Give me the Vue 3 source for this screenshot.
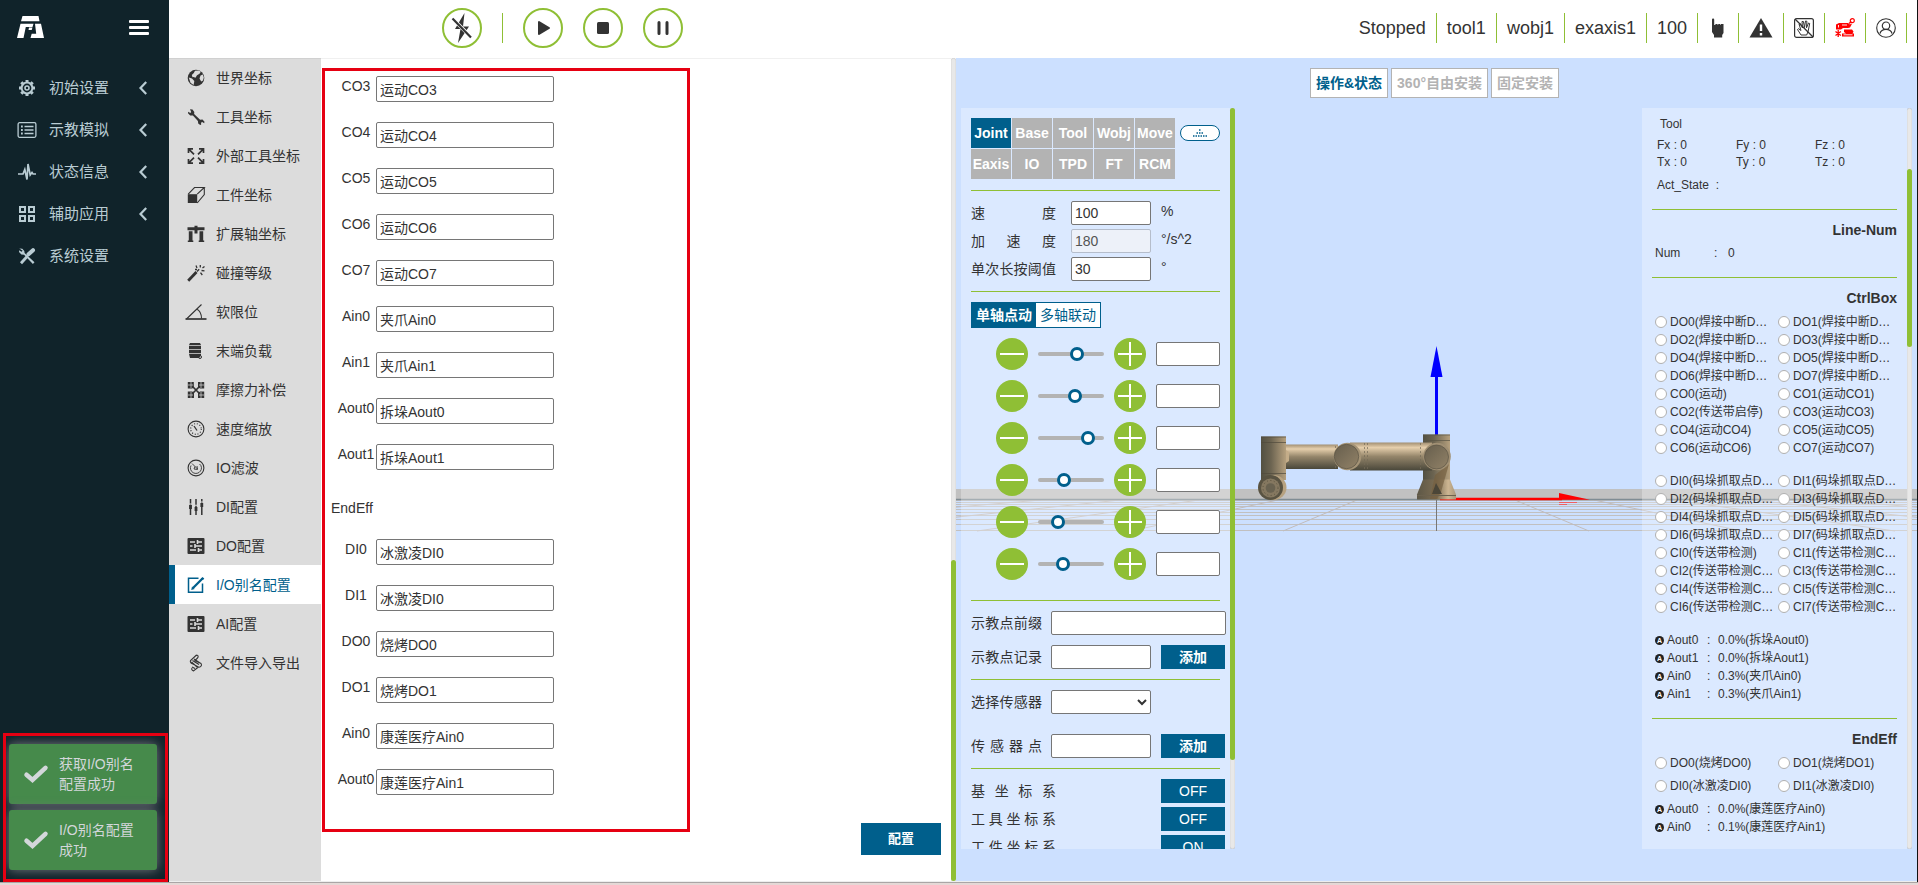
<script setup>
import { ref } from 'vue'

const mainMenu = [
  { label: '初始设置', more: true, icon: '<path fill="none" stroke="currentColor" stroke-width="2" d="M9 3.6a5.4 5.4 0 1 1 0 10.8a5.4 5.4 0 1 1 0-10.8"/><circle cx="9" cy="9" r="2" fill="none" stroke="currentColor" stroke-width="1.6"/><path stroke="currentColor" stroke-width="3" d="M9 1v2.4M9 14.6V17M1 9h2.4M14.600 9H17M3.300 3.300l1.600 1.600M13.100 13.100l1.600 1.600M3.300 14.700l1.600-1.600M13.100 4.900l1.600-1.600"/>' },
  { label: '示教模拟', more: true, icon: '<rect x=".1" y="1.700" width="17.800" height="14.600" rx="1.500" fill="none" stroke="currentColor" stroke-width="1.300"/><path stroke="currentColor" stroke-width="1.300" d="M6.500 5.500h9M6.500 9h9M6.500 12.500h9"/><path stroke="currentColor" stroke-width="1.800" d="M3 5.500h1.800M3 9h1.800M3 12.500h1.800"/>' },
  { label: '状态信息', more: true, icon: '<path fill="none" stroke="currentColor" stroke-width="1.700" d="M0 11h5l1.800-4.500L9 16.500L10 1l2.200 11L14 9.500l1 1.500h3"/>' },
  { label: '辅助应用', more: true, icon: '<g fill="none" stroke="currentColor" stroke-width="2"><rect x="2" y="2" width="5" height="5"/><rect x="11" y="2" width="5" height="5"/><rect x="2" y="11" width="5" height="5"/><rect x="11" y="11" width="5" height="5"/></g>' },
  { label: '系统设置', more: false, icon: '<path fill="currentColor" d="M1.300 1.500l3 .3 2 2.200.3 2 9.900 9.200-1.600 1.900L6 7.700l-2.600-.2L1 5l.2-1.700 2.300 1.500 1.200-1z"/><path stroke="currentColor" stroke-width="4" stroke-linecap="round" d="M15 3.200L10.500 7.300"/><path stroke="currentColor" stroke-width="2.800" d="M9.500 9L3 16.300"/>' }
]

const tune = '<rect x=".5" y="1" width="17" height="16" rx="1" fill="currentColor"/><path stroke="#dcdcdc" stroke-width="1.600" d="M3 5h5M10.500 5h4.500M3 9h2.500M8 9h7M3 13h6M11.500 13h3.500M10.500 3v4M8 7v4M11.500 11v4"/>'
const subMenu = [
  { label: '世界坐标', icon: '<circle cx="9" cy="9" r="8.300" fill="currentColor"/><path fill="#dcdcdc" d="M8 1.800l4-.3 1.800 1.200-1.300 2-2.500 1.500-1.500 2.600-2-.9-1 .3-.7-2.200 2-2zM13.500 6.500l2.300-1 1 3-.8 3-1.800 1-1.700-3zM1.800 8.500l3.200 1 2.300 2.500-.3 2-.5 2-3-2.200z"/>' },
  { label: '工具坐标', icon: '<path fill="currentColor" d="M3 1.200l2.500.3L7.300 4l-.2 2 6 5.800 2.400-.3 2 2.200-.3 1.500-2-1.200-1.200.7.200 1.800-1 .5-2-1.400-.3-2.600-5-5.500-2.700.1L1 5.200l.2-1.400 2.100 1.100.9-.9z"/>' },
  { label: '外部工具坐标', icon: '<path fill="none" stroke="currentColor" stroke-width="1.700" d="M1.500 6V1.800H6M2 2.300l5 5M12 1.800h4.500V6M16 2.300l-5 5M1.500 12v4.200H6M2 15.700l5-5M12 16.200h4.500V12M16 15.700l-5-5"/>' },
  { label: '工件坐标', icon: '<rect x=".8" y="8.200" width="9.400" height="8.800" fill="currentColor"/><path fill="none" stroke="currentColor" stroke-width="1.100" d="M1.200 8.200L7.500 1.500h9.800L10.200 8.200M17.300 1.500v7L10.200 17"/>' },
  { label: '扩展轴坐标', icon: '<path fill="currentColor" d="M.5 2.200h7V.8h3v1.400h7v3h-7v3.300h-3V5.200h-7zM1.800 6.200h3.700v9.300h.8v1.500H.8v-1.500h1zM12.500 6.200h3.700v9.300h1v1.500h-5.500v-1.500h.8z"/>' },
  { label: '碰撞等级', icon: '<path stroke="currentColor" stroke-width="2.800" d="M1.200 16.800L9.500 8"/><path stroke="currentColor" stroke-width="1.300" d="M10 7.500l2.200-2.200M9 1.500l1 2.500M13.300 1v2.500M17.500 2.500l-2 1.600M14.500 6.500l3 .4M13.500 8.700l1.800 2.300M8 5.500h2"/>' },
  { label: '软限位', icon: '<path fill="none" stroke="currentColor" stroke-width="1.100" d="M-.5 16L14.500 1.500M9.800 6c3.200 1.800 4.700 5 4.700 9.500"/><path stroke="currentColor" stroke-width="1.700" d="M-1.500 16h21"/>' },
  { label: '末端负载', icon: '<path fill="currentColor" d="M3 1h10l1 2H2zM2 3.800h12v3.400H2zM2 8h12v3.200H2zM2 12h12v1.200l-2 2.800H3z"/><circle cx="13" cy="15" r="1.500" fill="none" stroke="currentColor"/>' },
  { label: '摩擦力补偿', icon: '<path fill="currentColor" d="M.8 1h6v5l-1.500 1.500H.8zM11 1h6.200v6.500H13L11 6zM.8 10.500h4.500L7 12v5H.8zM13 10.500h4.200V17H11v-5z"/><path stroke="currentColor" stroke-width="1.700" d="M5.500 5.500l7 7M12.500 5.500l-7 7"/><path stroke="#dcdcdc" stroke-width=".7" d="M4 1v6M1 4h5M14 1v6M12 4h5M4 11v6M1 14h5M14 11v6M12 14h5"/>' },
  { label: '速度缩放', icon: '<circle cx="9" cy="9" r="7.900" fill="none" stroke="currentColor" stroke-width="1.100"/><circle cx="9" cy="9" r="5.300" fill="none" stroke="currentColor" stroke-width="1.200" stroke-dasharray="1 1.800"/><path stroke="currentColor" stroke-width="1.300" d="M7 6l3 4.500"/>' },
  { label: 'IO滤波', icon: '<circle cx="9" cy="9" r="7.900" fill="none" stroke="currentColor" stroke-width="1.100"/><path fill="none" stroke="currentColor" stroke-width=".9" d="M4 6.500a5.500 5.500 0 0 0 9.500 5.500a5 5 0 0 0-1-7M5 4.500l5.500 5.500M8 7.500l-1 2.500 3.500.5L10 7"/>' },
  { label: 'DI配置', icon: '<path stroke="currentColor" stroke-width="1.500" d="M3.500 1v16M9 1v16M14.800 1v16"/><path stroke="#dcdcdc" stroke-width="2.500" d="M3.500 5.500v1M9 6.800v1M14.800 3.500v1"/><path stroke="currentColor" stroke-width="2.800" d="M3.500 7v4M9 9v4M14.800 5v4"/>' },
  { label: 'DO配置', icon: tune },
  { label: 'I/O别名配置', active: true, icon: '<path fill="none" stroke="currentColor" stroke-width="1.500" d="M11.500 2.200h-10v14h14V7.500"/><path stroke="currentColor" stroke-width="2.300" d="M6 12l9.500-9.500"/><path fill="currentColor" d="M4.200 14l.8-3.500L7.700 13zM14 2.500l1.500-1.500 1.800 1.500L16 4z"/>' },
  { label: 'AI配置', icon: tune },
  { label: '文件导入导出', icon: '<path fill="none" stroke="currentColor" stroke-width="1.100" d="M9.500 1L3.500 6.500c-.8 2 1 3 2.500 3.500l5.500 3L6.500 17c-1.500-.5-2.200-1.700-1.500-3M9.500 1c2 .2 2 2 1 3L8 6.500l6 3c1.500 2-.5 3.500-2 3.800M5.500 6.500l6.500 4M7 5l6 4M5 13l3 1.500M4.500 8l5.500 5"/>' }
]

const ctrlFields = ref([
  ['CO3', '运动CO3'], ['CO4', '运动CO4'], ['CO5', '运动CO5'], ['CO6', '运动CO6'], ['CO7', '运动CO7'],
  ['Ain0', '夹爪Ain0'], ['Ain1', '夹爪Ain1'], ['Aout0', '拆垛Aout0'], ['Aout1', '拆垛Aout1']
])
const endFields = ref([
  ['DI0', '冰激凌DI0'], ['DI1', '冰激凌DI0'], ['DO0', '烧烤DO0'], ['DO1', '烧烤DO1'], ['Ain0', '康莲医疗Ain0'], ['Aout0', '康莲医疗Ain1']
])

const tabs = ['Joint', 'Base', 'Tool', 'Wobj', 'Move', 'Eaxis', 'IO', 'TPD', 'FT', 'RCM']
const params = [
  { id: 'speed', label: '速度', value: '100', unit: '%' },
  { id: 'acc', label: '加速度', value: '180', unit: '°/s^2', disabled: true },
  { id: 'press', label: '单次长按阈值', value: '30', unit: '°' }
]
const joints = ref([32, 30, 43, 19, 13, 18])
const frames = [['基坐标系', 'OFF'], ['工具坐标系', 'OFF'], ['工件坐标系', 'ON']]

const status = ['Stopped', 'tool1', 'wobj1', 'exaxis1', '100']
const forces = ['Fx : 0', 'Fy : 0', 'Fz : 0', 'Tx : 0', 'Ty : 0', 'Tz : 0']
const outputs = [
  'DO0(焊接中断D…', 'DO1(焊接中断D…', 'DO2(焊接中断D…', 'DO3(焊接中断D…', 'DO4(焊接中断D…', 'DO5(焊接中断D…', 'DO6(焊接中断D…', 'DO7(焊接中断D…',
  'CO0(运动)', 'CO1(运动CO1)', 'CO2(传送带启停)', 'CO3(运动CO3)', 'CO4(运动CO4)', 'CO5(运动CO5)', 'CO6(运动CO6)', 'CO7(运动CO7)'
]
const inputs = [
  'DI0(码垛抓取点D…', 'DI1(码垛抓取点D…', 'DI2(码垛抓取点D…', 'DI3(码垛抓取点D…', 'DI4(码垛抓取点D…', 'DI5(码垛抓取点D…', 'DI6(码垛抓取点D…', 'DI7(码垛抓取点D…',
  'CI0(传送带检测)', 'CI1(传送带检测C…', 'CI2(传送带检测C…', 'CI3(传送带检测C…', 'CI4(传送带检测C…', 'CI5(传送带检测C…', 'CI6(传送带检测C…', 'CI7(传送带检测C…'
]
const analog = [['Aout0', '0.0%(拆垛Aout0)'], ['Aout1', '0.0%(拆垛Aout1)'], ['Ain0', '0.3%(夹爪Ain0)'], ['Ain1', '0.3%(夹爪Ain1)']]
const endIo = ['DO0(烧烤DO0)', 'DO1(烧烤DO1)', 'DI0(冰激凌DI0)', 'DI1(冰激凌DI0)']
const endAnalog = [['Aout0', '0.0%(康莲医疗Ain0)'], ['Ain0', '0.1%(康莲医疗Ain1)']]

const gridRows = [501, 503, 505, 507, 510, 513, 516, 520, 525, 531]
const gridRays = [-7, -6, -5, -4, -3, -2, -1, 1, 2, 3, 4, 5, 6, 7]
</script>

<template>
  <div class="app">
    <div class="shell">
      <aside class="sidebar">
        <div class="brand">
          <svg class="logo" viewBox="0 0 27 22" aria-label="logo"><path fill="#fff" d="M5.500 0h16l1 5.200H4zM3.500 7.700h13l-1 3.300H8.800L6.500 22H0zM12 11.500h3.500l-.8 2.500h-3.200zM18 7.700h6L27 22H13.500l1.200-4.200h4.500z"/></svg>
          <button class="burger" aria-label="menu"><i></i><i></i><i></i></button>
        </div>
        <nav class="menu">
          <a v-for="m in mainMenu" :key="m.label" href="#" class="menu-item">
            <svg viewBox="0 0 18 18" v-html="m.icon"></svg>
            <span>{{ m.label }}</span>
            <svg v-if="m.more" class="chev" viewBox="0 0 8 14"><path fill="none" stroke="currentColor" stroke-width="2.200" d="M7.200 1L1.500 7l5.700 6"/></svg>
          </a>
        </nav>
        <div class="toasts">
          <div v-for="t in ['获取I/O别名配置成功', 'I/O别名配置成功']" :key="t" class="toast">
            <svg viewBox="0 0 24 18"><path fill="none" stroke="#d3d7da" stroke-width="4.500" stroke-linecap="round" d="M2.500 9.700l6 5.300L21.500 2.800"/></svg>
            <span>{{ t }}</span>
          </div>
        </div>
      </aside>

      <div class="page">
        <header class="topbar">
          <div class="runs">
            <button class="round" aria-label="enable"><svg viewBox="0 0 24 32"><path fill="#333" d="M14.500 1L5 17h5.500L8 31l11-16.500h-6z"/><path stroke="#fff" stroke-width="3.600" d="M2 6l20 20"/><path stroke="#333" stroke-width="2.200" d="M2.500 6.500l18.500 19"/></svg></button>
            <i class="bar"></i>
            <button class="round" aria-label="start"><svg viewBox="0 0 24 32"><path fill="#333" stroke="#333" stroke-width="2" stroke-linejoin="round" d="M8 10v12l10-6z"/></svg></button>
            <button class="round" aria-label="stop"><svg viewBox="0 0 24 32"><rect x="6" y="10" width="12" height="12" rx="1.500" fill="#333"/></svg></button>
            <button class="round" aria-label="pause"><svg viewBox="0 0 24 32"><path stroke="#333" stroke-width="3" stroke-linecap="round" d="M8 10.500v11M16 10.500v11"/></svg></button>
          </div>
          <div class="states">
            <span v-for="s in status" :key="s">{{ s }}</span>
            <span class="ico"><svg viewBox="0 0 20 20"><path fill="#333" d="M4 1.500c0-1.500 2.200-1.500 2.200 0V7h1.200V6h2.200v1h.6V6h2.200v1h.6V6h2.500v9l-1.300 2v2.500H6V17l-2-3z"/></svg></span>
            <span class="ico warn"><svg viewBox="0 0 24 20"><path fill="#333" d="M12 0l11.500 19.500H.5z"/><path stroke="#fff" stroke-width="2.400" d="M12 6.500v6.500M12 15v2.400"/></svg></span>
            <span class="ico"><svg viewBox="0 0 20 20"><rect x=".6" y=".6" width="18.800" height="18.800" rx="2" fill="none" stroke="#333" stroke-width="1.200"/><path fill="none" stroke="#333" d="M7 17L3.500 11.500l1-.8L7 12.500 5 6l1.300-.4L8.500 10 8 3.500h1.400L10.500 9.500 11.500 3l1.400.3-.4 6.500L14.500 5l1.200.5-1.500 7.500-1.500 4z"/><path stroke="#333" stroke-width="1.300" d="M1 1l18 18"/></svg></span>
            <span class="ico"><svg viewBox="0 0 20 20"><path fill="red" d="M1 6.500l3-1.500h9l2 1.500 1-1 .8.800L15 9.500l-2 .5H8l-2 1.500H1z"/><path fill="none" stroke="red" stroke-width="1.300" d="M14 5.500l2.200-2"/><circle cx="17.300" cy="2.700" r="2" fill="none" stroke="red" stroke-width="1.200"/><path fill="red" d="M9 11.500h8l1.500 2-1 2H19v3H7v-3h4l-2-1.500z"/><path stroke="#fff" stroke-width=".9" d="M3.500 7v2.500M7 7h5M8.500 16.800h9"/><path stroke="red" stroke-width="1.300" d="M3.200 12v7M.5 13.500l5.400 4M.5 17.500l5.400-4"/></svg></span>
            <span class="ico"><svg viewBox="0 0 20 20"><circle cx="10" cy="10" r="9.300" fill="none" stroke="#333" stroke-width="1.100"/><circle cx="10" cy="7.700" r="3.700" fill="none" stroke="#333" stroke-width="1.200"/><path fill="none" stroke="#333" stroke-width="1.200" d="M4 15.500c.8-3 3-4.200 6-4.200s5.200 1.200 6 4.200"/></svg></span>
          </div>
        </header>

        <div class="work">
          <nav class="submenu">
            <a v-for="s in subMenu" :key="s.label" href="#" class="sub" :class="{ active: s.active }">
              <svg viewBox="0 0 18 18" v-html="s.icon"></svg><span>{{ s.label }}</span>
            </a>
          </nav>

          <main class="config">
            <form class="frame" @submit.prevent>
              <div class="fields">
                <div v-for="f in ctrlFields" :key="f[0]" class="field">
                  <label :for="'ctrl-' + f[0]">{{ f[0] }}</label>
                  <input :id="'ctrl-' + f[0]" v-model="f[1]" type="text">
                </div>
              </div>
              <h2>EndEff</h2>
              <div class="fields">
                <div v-for="f in endFields" :key="f[0]" class="field">
                  <label :for="'end-' + f[0]">{{ f[0] }}</label>
                  <input :id="'end-' + f[0]" v-model="f[1]" type="text">
                </div>
              </div>
            </form>
            <button class="save">配置</button>
          </main>
          <div class="track main-track"><i></i></div>

          <section class="viewer">
            <svg class="scene" viewBox="956 58 961 823" preserveAspectRatio="xMidYMid slice">
              <defs>
                <linearGradient id="arm" x1="0" y1="0" x2="0" y2="1"><stop offset="0" stop-color="#a28f72"/><stop offset=".18" stop-color="#e6cfac"/><stop offset=".5" stop-color="#94856a"/><stop offset="1" stop-color="#49473a"/></linearGradient>
                <linearGradient id="post" x1="0" y1="0" x2="1" y2="0"><stop offset="0" stop-color="#525042"/><stop offset=".4" stop-color="#6c6451"/><stop offset="1" stop-color="#b5a07e"/></linearGradient>
                <linearGradient id="foot" x1="0" y1="0" x2="1" y2="0"><stop offset="0" stop-color="#5d5746"/><stop offset=".5" stop-color="#7c6d53"/><stop offset=".8" stop-color="#cdb692"/><stop offset="1" stop-color="#a8967a"/></linearGradient>
                <linearGradient id="cap" x1="0" y1="0" x2="1" y2="1"><stop offset="0" stop-color="#665e4d"/><stop offset="1" stop-color="#928267"/></linearGradient>
              </defs>
              <rect x="0" y="489" width="2900" height="10" fill="#c1c1c1"/>
              <path stroke="#c1c0c0" fill="none" :d="gridRows.map(y => `M0 ${y - 0.5}H2900`).join('')"/>
              <path stroke="#c1bcbc" fill="none" :d="gridRays.map(k => `M${1436 + 79 * k} 500L${1436 + 153 * k} 531`).join('')"/>
              <path stroke="#7f8c93" stroke-width="1.300" d="M0 499.500H2900"/>
              <path stroke="#777" d="M1436.500 500v31"/>
              <path stroke="#00f" stroke-width="3" d="M1436.500 375v60"/>
              <path fill="#00f" d="M1436.500 346l6 31h-12z"/>
              <path stroke="red" stroke-width="2.400" d="M1440 499h122"/>
              <path fill="red" d="M1559 493l31 6.800h-31z"/>
              <path stroke="#f06060" d="M1559 502.500h18M1559 504.500h8"/>
              <path fill="url(#post)" d="M1423 434.500h27V480h-27z"/>
              <path stroke="#5b5646" d="M1423 440.500h27M1423 435h27" opacity=".7"/>
              <path fill="url(#foot)" d="M1423 479.500h27l6 15v5h-39v-5z"/>
              <path fill="#755f40" opacity=".7" d="M1449 464l-8 28-4 7h-7l5-24z"/>
              <path fill="#4b4638" d="M1436 483l6 11h-10z"/>
              <path stroke="#6b614e" d="M1417 495.500h39"/>
              <path fill="url(#arm)" d="M1284 444.500h54V469h-54z"/>
              <path fill="url(#arm)" d="M1350 442.500h82v28h-82z"/>
              <path stroke="#756b58" opacity=".7" stroke-dasharray="2 2" d="M1335.500 446v22M1364.500 443v27M1367.500 443v27M1420.500 443v27"/>
              <circle cx="1347.500" cy="456.500" r="13.800" fill="#a49376"/>
              <circle cx="1346.500" cy="456.500" r="12.200" fill="url(#cap)" stroke="#5b5445" stroke-width=".7"/>
              <circle cx="1437" cy="456.500" r="13.800" fill="#a08f73"/>
              <circle cx="1436.500" cy="457" r="12" fill="url(#cap)" stroke="#5b5445" stroke-width=".7"/>
              <path fill="url(#post)" d="M1261 436.500h25V480h-25z"/>
              <path stroke="#514b3d" opacity=".7" d="M1261 437h25M1261 442.500h25M1261 473.500h25"/>
              <path fill="#c4ad89" d="M1286 450l3 2v9l-3 2z"/>
              <circle cx="1274" cy="487.500" r="12.500" fill="#b7a280"/>
              <circle cx="1270.500" cy="487.500" r="12.500" fill="#595342"/>
              <circle cx="1270.500" cy="488" r="9.500" fill="#857860"/>
              <circle cx="1270.500" cy="488" r="7.500" fill="none" stroke="#5b533f" stroke-dasharray="1 2.500"/>
              <circle cx="1270.500" cy="488" r="4.800" fill="#696250"/>
            </svg>

            <div class="modes">
              <button class="on">操作&amp;状态</button><button>360°自由安装</button><button>固定安装</button>
            </div>

            <div class="panels">
              <div class="panel left">
                <div class="body">
                  <div class="tabrow">
                    <div class="tabs">
                      <button v-for="(t, i) in tabs" :key="t" :class="{ on: i === 0 }">{{ t }}</button>
                    </div>
                    <button class="pill" aria-label="collapse"><svg viewBox="0 0 14 8"><path stroke="#005f8c" stroke-width="1.500" stroke-dasharray="1.500 1" d="M6 1h2M3.500 4h7M0 7h14"/></svg></button>
                  </div>
                  <hr>
                  <div class="stack tight">
                    <div v-for="p in params" :key="p.id" class="row">
                      <label :for="p.id" class="wide">{{ p.label }}</label>
                      <input :id="p.id" class="num" type="text" :value="p.value" :disabled="p.disabled">
                      <span class="unit">{{ p.unit }}</span>
                    </div>
                  </div>
                  <hr>
                  <div class="seg"><button class="on">单轴点动</button><button>多轴联动</button></div>
                  <div class="jogs">
                    <div v-for="(j, i) in joints" :key="i" class="jog">
                      <button class="jogbtn" :aria-label="'J' + (i + 1) + ' minus'"><svg viewBox="0 0 32 32"><path stroke="#fff" stroke-width="2" d="M4 16h24"/></svg></button>
                      <input v-model="joints[i]" type="range" min="0" max="52" :aria-label="'J' + (i + 1)">
                      <button class="jogbtn" :aria-label="'J' + (i + 1) + ' plus'"><svg viewBox="0 0 32 32"><path stroke="#fff" stroke-width="2" d="M4 16h24M16 4v24"/></svg></button>
                      <input type="text" class="jval" :aria-label="'J' + (i + 1) + ' value'">
                    </div>
                  </div>
                  <hr>
                  <div class="stack">
                    <div class="row"><label for="prefix">示教点前缀</label><input id="prefix" class="long" type="text"></div>
                    <div class="row"><label for="record">示教点记录</label><input id="record" class="mid" type="text"><button class="act">添加</button></div>
                  </div>
                  <hr>
                  <div class="stack loose">
                    <div class="row"><label for="sensor">选择传感器</label><select id="sensor" class="mid"><option></option></select></div>
                    <div class="row"><label for="spoint">传感器点</label><input id="spoint" class="mid" type="text"><button class="act">添加</button></div>
                  </div>
                  <hr>
                  <div class="stack tight">
                    <div v-for="f in frames" :key="f[0]" class="row toggles"><span class="wide">{{ f[0] }}</span><button class="act off">{{ f[1] }}</button></div>
                  </div>
                </div>
                <div class="track left-track"><i></i></div>
              </div>

              <div class="panel right">
                <div class="body">
                  <p class="tool">Tool</p>
                  <div class="forces"><span v-for="f in forces" :key="f">{{ f }}</span></div>
                  <p class="act-state">Act_State &nbsp;:</p>
                  <hr>
                  <h3>Line-Num</h3>
                  <div class="line-num"><span>Num</span><span>:</span><span>0</span></div>
                  <hr>
                  <h3>CtrlBox</h3>
                  <div class="ios"><label v-for="o in outputs" :key="o"><input type="radio" :name="o">{{ o }}</label></div>
                  <div class="ios later"><label v-for="o in inputs" :key="o"><input type="radio" :name="o">{{ o }}</label></div>
                  <div class="analogs later">
                    <div v-for="a in analog" :key="a[0]"><i class="a">A</i><span>{{ a[0] }}</span><span>:</span><span>{{ a[1] }}</span></div>
                  </div>
                  <hr>
                  <h3>EndEff</h3>
                  <div class="ios spaced"><label v-for="o in endIo" :key="o"><input type="radio" :name="'end' + o">{{ o }}</label></div>
                  <div class="analogs">
                    <div v-for="a in endAnalog" :key="a[0]"><i class="a">A</i><span>{{ a[0] }}</span><span>:</span><span>{{ a[1] }}</span></div>
                  </div>
                </div>
                <div class="track right-track"><i></i></div>
              </div>
            </div>
          </section>
        </div>
      </div>
    </div>
    <div class="edge"></div>
  </div>
</template>

<style>
body { margin: 0; }
</style>

<style scoped>
.app, .app * { box-sizing: border-box; }
.app {
  height: 100vh;
  display: flex;
  flex-direction: column;
  overflow: hidden;
  font-family: "Liberation Sans", "Noto Sans CJK SC", sans-serif;
  font-size: 14px;
  line-height: 20px;
  color: #333;
  background: #fff;
}
button, input, select { font: inherit; color: inherit; margin: 0; }
button { padding: 0; border: 0; cursor: pointer; white-space: nowrap; }
a { text-decoration: none; color: inherit; }
p, h2, h3 { margin: 0; font-weight: normal; }
svg { display: block; flex: none; overflow: visible; }

.shell { flex: 1; min-height: 0; display: flex; border-right: 1px solid #111; }
.edge { height: 3px; flex: none; background: #e5d8d6; border-top: 1px solid #aaa5a5; }

.sidebar { width: 169px; flex: none; background: #10232a; color: #b9ccd3; display: flex; flex-direction: column; }
.brand { height: 67px; padding: 16px 20px 0 17px; display: flex; justify-content: space-between; align-items: flex-start; }
.logo { width: 27px; height: 22px; }
.burger { width: 20px; margin-top: 4px; background: none; display: flex; flex-direction: column; gap: 3px; }
.burger i { height: 3px; background: #fff; border-radius: 1px; width: 100%; }
.menu-item { height: 42px; padding: 0 22px 0 18px; display: flex; align-items: center; font-size: 15px; }
.menu-item svg { width: 18px; height: 18px; margin-right: 13px; }
.menu-item .chev { width: 8px; height: 14px; margin: 0 0 0 auto; }
.toasts { margin: auto 1px 0 3px; height: 149px; border: 3px solid #e60012; padding: 8px 8px 0 3px; display: flex; flex-direction: column; gap: 6px; overflow: hidden; }
.toast { height: 60px; flex: none; background: #468a4b; border-radius: 3px; box-shadow: 0 0 12px #7a7a80; color: #d3d7da; display: flex; align-items: center; padding: 0 16px 0 15px; gap: 11px; }
.toast svg { width: 24px; height: 18px; }

.page { flex: 1; min-width: 0; display: flex; flex-direction: column; }
.topbar { height: 58px; flex: none; display: flex; justify-content: space-between; padding: 0 10px 0 273px; background: #fff; }
.runs { display: flex; align-items: center; height: 56px; gap: 20px; }
.round { width: 40px; height: 40px; border-radius: 50%; border: 2px solid #8fbf35; background: #fff; display: flex; align-items: center; justify-content: center; }
.round svg { width: 24px; height: 32px; }
.bar { width: 1px; height: 30px; background: #8fbf35; }
.states { display: flex; align-items: center; height: 56px; font-size: 18px; }
.states span { height: 30px; padding: 0 10px; border-right: 1px solid #8fbf35; display: flex; align-items: center; }
.states .ico svg { width: 20px; height: 20px; }
.states .warn svg { width: 24px; }

.work { flex: 1; min-height: 0; display: grid; grid-template-columns: 152px minmax(0, 630fr) 5px minmax(0, 961fr); grid-template-rows: minmax(0, 1fr); border-bottom: 1px solid #eee; }
.submenu { background: #dcdcdc; box-shadow: inset 0 1px 0 #d0d0d0; }
.sub { height: 39px; display: flex; align-items: center; padding-left: 18px; gap: 11px; white-space: nowrap; }
.sub svg { width: 18px; height: 18px; }
.sub.active { background: #fff; color: #005f8c; border-left: 6px solid #005f8c; padding-left: 12px; }

.config { display: flex; justify-content: space-between; align-items: flex-start; padding: 9px 10px 0 1px; border-top: 1px solid #f0f0f0; overflow: hidden; }
.frame { width: 368px; border: 3px solid #e60012; padding: 5px 0 34px 11px; }
.fields { display: flex; flex-direction: column; gap: 20px; }
.field { display: flex; height: 26px; }
.field label { width: 40px; text-align: center; }
.field input { width: 178px; }
.frame h2 { font-size: 14px; margin: 28px 0 21px -5px; }
input[type=text], select { border: 1px solid #767676; border-radius: 2px; background: #fff; padding: 0 3px; height: 24px; outline: none; }
.field input[type=text] { height: 26px; padding-bottom: 1px; }
.save { align-self: flex-end; width: 80px; height: 32px; margin-bottom: 26px; background: #005f8c; color: #fff; font-weight: bold; font-size: 13px; }

.track { width: 5px; flex: none; background: #e8e8e8; border-radius: 3px; box-shadow: inset 0 0 1px #999; display: flex; flex-direction: column; }
.track i { background: #8fbf35; border-radius: 3px; width: 5px; }
.main-track i { margin-top: auto; height: 39%; }
.left-track i { height: 88%; }
.right-track i { margin-top: 61px; height: 24%; }

.viewer { position: relative; display: flex; flex-direction: column; background: #cce0ff; overflow: hidden; }
.scene { position: absolute; inset: 0; width: 100%; height: 100%; }
.modes { position: relative; height: 50px; padding: 10px 4px 0 0; display: flex; justify-content: center; gap: 3px; }
.modes button { height: 30px; padding: 0 5px; border: 1px solid #b3b3b3; background: #fff; color: #b3b3b3; font-weight: bold; }
.modes .on { color: #005f8c; }
.panels { position: relative; flex: 1; min-height: 0; margin: 0 5px 32px; display: flex; justify-content: space-between; }
.panel { display: flex; min-height: 0; }
.panel.left { width: 274px; }
.panel.right { width: 270px; }
.body { flex: 1; min-width: 0; background: rgba(255, 255, 255, .3); padding: 10px; overflow: hidden; }
hr { border: 0; height: 1px; background: #8fbf35; margin: 10px 0; }

.tabrow { display: flex; gap: 5px; padding-bottom: 1px; }
.tabs { display: grid; grid-template-columns: repeat(5, 40px); grid-auto-rows: 30px; gap: 1px; }
.tabs button { background: #b3b3b3; color: #fff; font-weight: bold; }
.tabs .on { background: #005f8c; }
.pill { width: 40px; height: 16px; margin-top: 7px; border: 1px solid #005f8c; border-radius: 8px; background: #fff; display: flex; align-items: center; justify-content: center; }
.pill svg { width: 14px; height: 8px; }
.stack { display: flex; flex-direction: column; gap: 10px; }
.stack.tight { gap: 4px; }
.stack.loose { gap: 20px; }
.row { display: flex; align-items: center; height: 24px; }
.row label { width: 71px; margin-right: 9px; text-align-last: justify; flex: none; }
.row .wide { width: 85px; margin-right: 15px; text-align-last: justify; flex: none; }
.row input, .row select { flex: none; }
.num { width: 80px; }
.num:disabled { background: #edf1f9; border-color: #b5bdcb; color: #545454; }
.unit { margin-left: 10px; align-self: flex-start; }
.long { width: 175px; }
.mid { width: 100px; }
.act { width: 64px; height: 24px; flex: none; margin-left: 10px; background: #005f8c; color: #fff; font-weight: bold; }
.act.off { font-weight: normal; margin-left: auto; }
.toggles { margin-right: -5px; }
.seg { display: inline-flex; vertical-align: top; height: 26px; border: 1px solid #005f8c; background: #fff; }
.seg button { width: 64px; background: #fff; color: #005f8c; }
.seg .on { background: #005f8c; color: #fff; font-weight: bold; }
.jogs { display: flex; flex-direction: column; gap: 10px; margin: 10px 0 20px 25px; }
.jog { display: flex; align-items: center; gap: 10px; }
.jogbtn { width: 32px; height: 32px; flex: none; border-radius: 50%; background: #8fbf35; }
.jogbtn svg { width: 32px; height: 32px; }
.jval { width: 64px; flex: none; }
input[type=range] { appearance: none; width: 66px; height: 14px; flex: none; background: none; }
input[type=range]::-webkit-slider-runnable-track { height: 4px; border-radius: 2px; background: #b3b3b3; }
input[type=range]::-webkit-slider-thumb { appearance: none; width: 14px; height: 14px; margin-top: -5px; border-radius: 50%; border: 3px solid #005f8c; background: #fff; }

.right .body { padding-top: 7px; font-size: 12px; line-height: 18px; }
.right hr { margin: 15px 0 10px; }
.tool { padding-left: 8px; }
.forces { display: grid; grid-template-columns: 79px 79px 79px; grid-auto-rows: 17px; padding: 4px 0 0 5px; line-height: 17px; }
.act-state { padding-left: 5px; margin-top: 5px; }
h3 { font-size: 14px; font-weight: bold; line-height: 20px; text-align: right; }
.line-num { display: grid; grid-template-columns: 59px 14px 1fr; padding: 4px 0 0 3px; }
.ios { display: grid; grid-template-columns: 123px 1fr; margin-top: 5px; padding-left: 3px; }
.ios label { display: flex; align-items: center; height: 18px; white-space: nowrap; }
.ios input { appearance: none; width: 12px; height: 12px; flex: none; border: 1px solid #b0b0b0; border-radius: 50%; background: #fff; margin-right: 3px; }
.ios.spaced { row-gap: 5px; margin-bottom: 5px; }
.ios.later, .later { margin-top: 15px; }
.analogs { padding-left: 3px; }
.analogs div { display: grid; grid-template-columns: 12px 40px 11px 1fr; align-items: center; height: 18px; }
.a { width: 9px; height: 9px; border-radius: 50%; background: #222; color: #fff; font: bold 7px/9px "Liberation Sans", sans-serif; text-align: center; }
</style>
